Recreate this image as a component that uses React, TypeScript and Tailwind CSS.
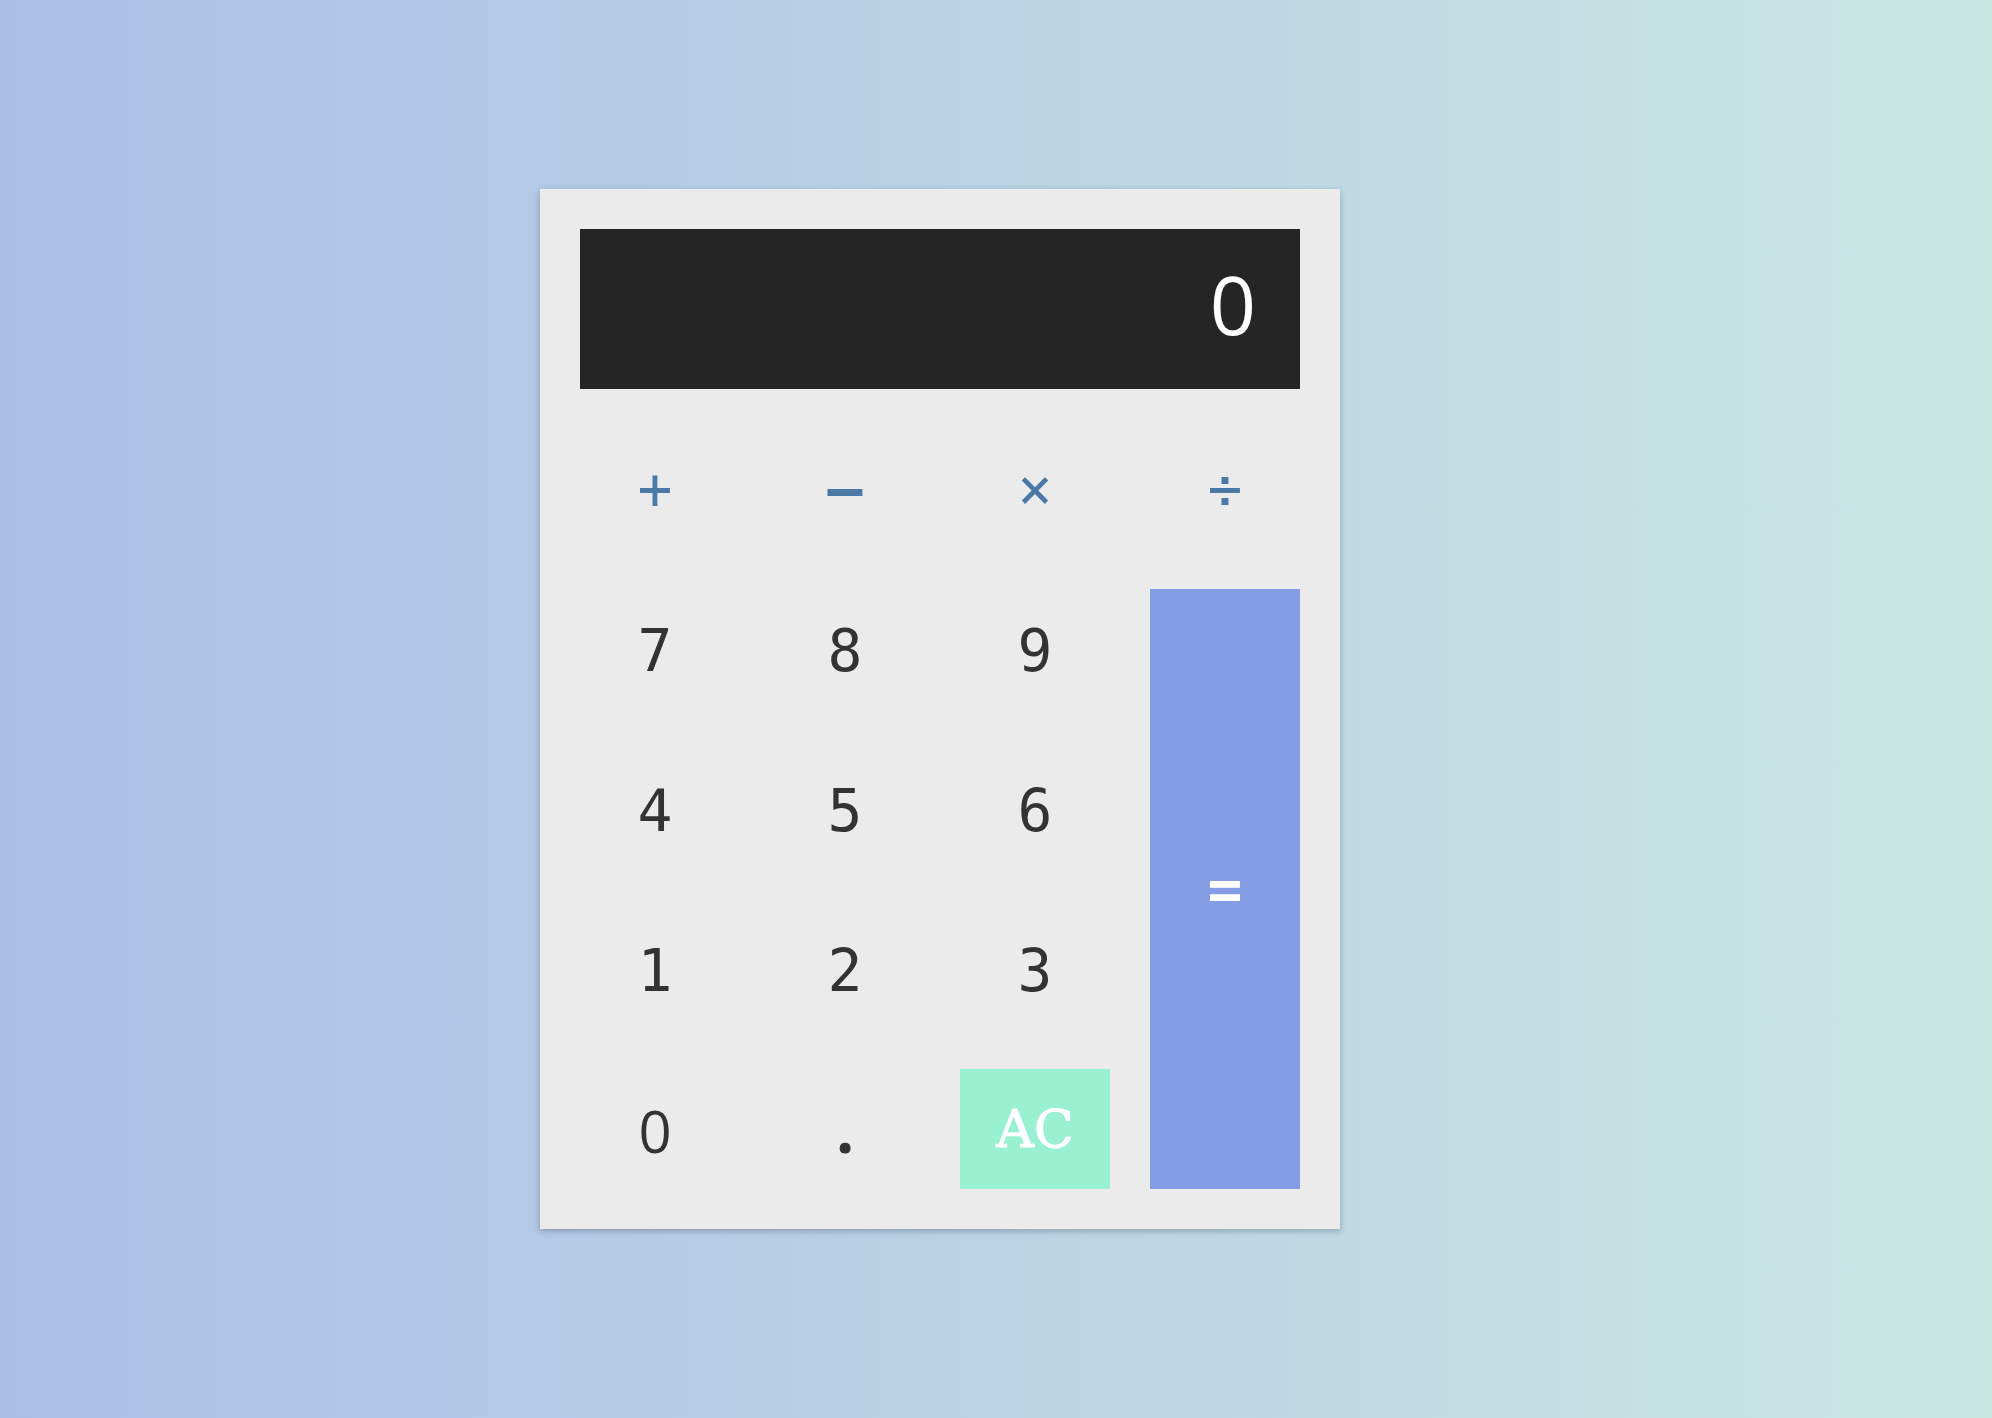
import { useState } from "react";

const ops = [
  { k: "+", label: "+", cls: "" },
  { k: "-", label: "–", cls: "font-bold text-[48px]" },
  { k: "*", label: "×", cls: "" },
  { k: "/", label: "÷", cls: "" },
];

const rows = [
  ["7", "8", "9"],
  ["4", "5", "6"],
  ["1", "2", "3"],
];

export default function App() {
  const [value, setValue] = useState("0");

  function press(k: string) {
    if (k === "AC") return setValue("0");
    setValue((v) => (v === "0" && k !== "." ? k : v + k));
  }

  const key =
    "h-[120px] flex items-center justify-center text-[58px] leading-none cursor-pointer select-none";

  return (
    <div className="min-h-screen w-full flex items-center justify-center pr-[112px] bg-linear-to-r from-[#acbfe7] to-[#c9e7e1]">
      <div
        className="w-[800px] p-10 bg-[#ebebeb] shadow-[0_2px_6px_rgba(40,60,90,0.35)] grid grid-cols-4 gap-10"
        style={{ fontFamily: '"DejaVu Sans Mono", monospace' }}
      >
        <div
          className="col-span-4 h-[160px] bg-[#252525] text-white flex items-center justify-end pr-[44px] pb-3 text-[81px] leading-none"
          style={{ fontFamily: '"Open Sans", sans-serif' }}
        >
          {value}
        </div>

        {ops.map((o) => (
          <div
            key={o.k}
            className={`${key} text-[#4a79a8] ${o.cls}`}
            onClick={() => press(o.k)}
          >
            {o.label}
          </div>
        ))}

        {rows[0].map((d) => (
          <div key={d} className={`${key} text-[#333] pt-1`} onClick={() => press(d)}>
            {d}
          </div>
        ))}
        <div
          className="row-span-4 bg-[#849de4] text-white flex items-center justify-center text-[58px] font-bold leading-none cursor-pointer"
          onClick={() => press("=")}
        >
          =
        </div>

        {rows.slice(1).map((r) =>
          r.map((d) => (
            <div key={d} className={`${key} text-[#333] pt-1`} onClick={() => press(d)}>
              {d}
            </div>
          ))
        )}

        <div
          className={`${key} text-[#333] pt-1`}
          style={{ fontFamily: '"Open Sans", sans-serif' }}
          onClick={() => press("0")}
        >
          0
        </div>
        <div
          className={`${key} text-[#333] font-bold text-[64px]`}
          style={{ fontFamily: '"Open Sans", sans-serif' }}
          onClick={() => press(".")}
        >
          .
        </div>
        <div
          className="h-[120px] bg-[#99f1d1] text-white flex items-center justify-center text-[52px] leading-none cursor-pointer"
          style={{ fontFamily: '"DejaVu Serif", serif', WebkitTextStroke: "1px white" }}
          onClick={() => press("AC")}
        >
          AC
        </div>
      </div>
    </div>
  );
}
